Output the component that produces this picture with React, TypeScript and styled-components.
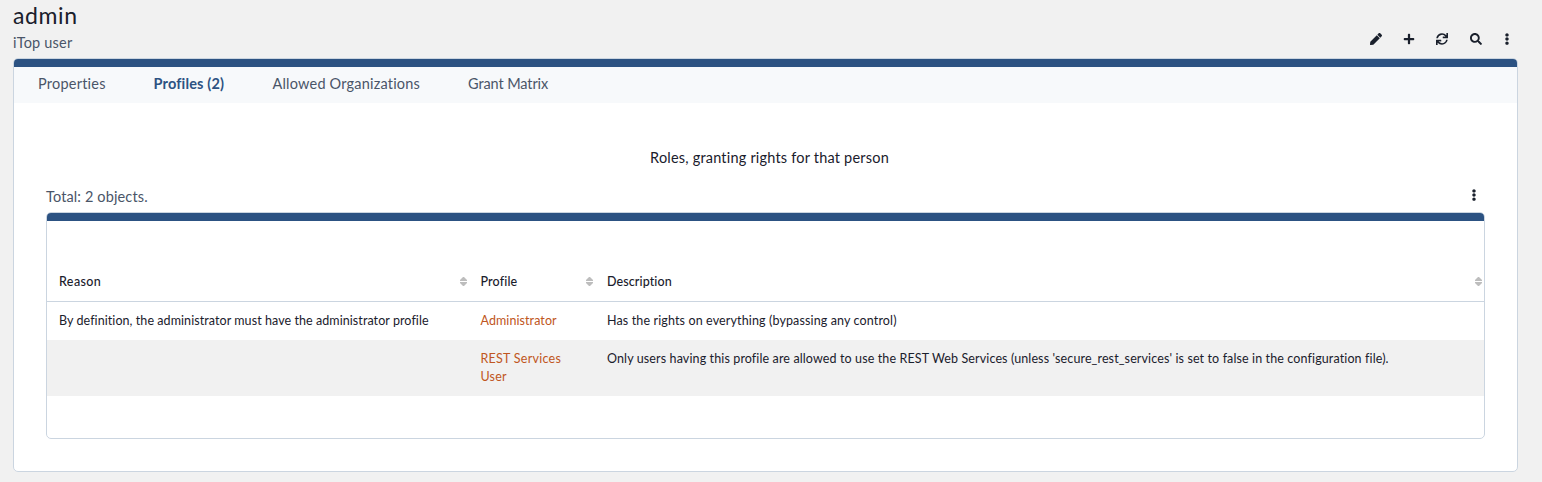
import React from "react";
import styled, { createGlobalStyle } from "styled-components";
import { FaEllipsisV, FaPen, FaPlus, FaSearch, FaSync } from "react-icons/fa";

const GlobalStyle = createGlobalStyle`
  *, *::before, *::after { box-sizing: border-box; }
  body {
    margin: 0;
    background: #f1f1f1;
    color: #1a202c;
    font-family: Lato, "Open Sans", sans-serif;
    font-size: 12.5px;
    line-height: 18px;
  }
`;

const Page = styled.main`
  height: 482px;
  padding: 0 24px 10px 13px;
  display: flex;
  flex-direction: column;
  overflow: hidden;
`;

const Header = styled.header`
  height: 58px;
  flex: none;
  display: flex;
  justify-content: space-between;
`;

const Title = styled.h1`
  margin: 0;
  font-size: 23px;
  font-weight: 400;
  line-height: 30px;
`;

const Subtitle = styled.div`
  margin-top: 2px;
  color: #4a5568;
  font-size: 14.5px;
  line-height: 21px;
`;

const Text = styled.span<{ $track?: number }>`
  letter-spacing: ${(p) => p.$track ?? 0}px;
  font-variant-ligatures: no-common-ligatures;
  white-space: nowrap;
`;

const Toolbar = styled.div`
  display: flex;
  align-items: center;
  height: 15px;
  margin: 31px -2px 0 0;
`;

const IconButton = styled.button<{ $width: number }>`
  width: ${(p) => p.$width}px;
  height: 15px;
  padding: 0;
  border: 0;
  background: none;
  color: #1a202c;
  font-size: 12px;
  display: flex;
  align-items: center;
  justify-content: center;
`;

const Panel = styled.section`
  border: 1px solid #cbd5e0;
  border-radius: 5px;
  background: #fff;
  overflow: hidden;
  &::before {
    content: "";
    display: block;
    height: 8px;
    background: #2c5282;
  }
`;

const DetailsPanel = styled(Panel)`
  flex: 1;
`;

const TabBar = styled.nav`
  height: 36px;
  padding-left: 24px;
  display: flex;
  align-items: center;
  background: #f7f9fb;
`;

const Tab = styled.a<{ $width: number; $active?: boolean }>`
  width: ${(p) => p.$width}px;
  color: ${(p) => (p.$active ? "#2c5282" : "#4a5568")};
  font-size: 14.5px;
  font-weight: ${(p) => (p.$active ? 700 : 400)};
  line-height: 21px;
  padding-bottom: 4px;
`;

const TabContent = styled.div`
  padding: 44px 32px 0;
`;

const Caption = styled.p`
  margin: 0;
  padding-left: 8px;
  font-size: 14.5px;
  line-height: 21px;
  text-align: center;
`;

const ListToolbar = styled.div`
  height: 44px;
  padding: 18px 5px 5px 0;
  display: flex;
  align-items: center;
  justify-content: space-between;
  color: #4a5568;
  font-size: 14.5px;
`;

const ListMenuButton = styled(IconButton)`
  margin-bottom: 4px;
`;

const ListPanel = styled(Panel)`
  height: 227px;
`;

const Table = styled.table`
  width: 100%;
  margin-top: 40px;
  border-collapse: collapse;
  table-layout: fixed;
`;

const HeadCell = styled.th<{ $width?: number }>`
  width: ${(p) => (p.$width ? `${p.$width}px` : "auto")};
  height: 40px;
  padding: 2px 2px 0 12px;
  border-bottom: 1px solid #cbd5e0;
  text-align: left;
  font-weight: 500;
`;

const HeadContent = styled.div`
  display: flex;
  align-items: center;
  justify-content: space-between;
`;

const SortSvg = styled.svg`
  flex: none;
  fill: #bdbdbd;
`;

const SortIcon = () => (
  <SortSvg width="7" height="9" viewBox="0 0 7 9" aria-hidden="true">
    <path d="M3 0h1l3 3v1H0V3z" />
    <path d="M0 5h7v1L4 9H3L0 6z" />
  </SortSvg>
);

const Row = styled.tr`
  &:nth-child(even) { background: #f1f1f1; }
`;

const Cell = styled.td`
  padding: 10px 0 10px 12px;
  vertical-align: top;
`;

const Link = styled.a`
  color: #c05621;
`;

const tabs = [
  { label: "Properties", width: 115.5, track: 0.22 },
  { label: "Profiles (2)", width: 119, track: 0.17, active: true },
  { label: "Allowed Organizations", width: 195.5, track: 0.2 },
  { label: "Grant Matrix", width: 100, track: -0.1 },
];

export default function App() {
  return (
    <>
      <GlobalStyle />
      <Page>
        <Header>
          <div>
            <Title><Text $track={0.6}>admin</Text></Title>
            <Subtitle><Text $track={0.2}>iTop user</Text></Subtitle>
          </div>
          <Toolbar>
            <IconButton $width={33} aria-label="Edit"><FaPen /></IconButton>
            <IconButton $width={33} aria-label="New"><FaPlus /></IconButton>
            <IconButton $width={34} aria-label="Refresh"><FaSync /></IconButton>
            <IconButton $width={34} aria-label="Search"><FaSearch /></IconButton>
            <IconButton $width={27} aria-label="More"><FaEllipsisV /></IconButton>
          </Toolbar>
        </Header>
        <DetailsPanel>
          <TabBar>
            {tabs.map((t) => (
              <Tab key={t.label} $width={t.width} $active={t.active}>
                <Text $track={t.track}>{t.label}</Text>
              </Tab>
            ))}
          </TabBar>
          <TabContent>
            <Caption><Text $track={0.2}>Roles, granting rights for that person</Text></Caption>
            <ListToolbar>
              <Text $track={0.13}>Total: 2 objects.</Text>
              <ListMenuButton $width={12} aria-label="List options"><FaEllipsisV /></ListMenuButton>
            </ListToolbar>
            <ListPanel>
              <Table>
                <thead>
                  <tr>
                    <HeadCell $width={421.5}><HeadContent><Text $track={0.4}>Reason</Text><SortIcon /></HeadContent></HeadCell>
                    <HeadCell $width={126.5}><HeadContent><Text $track={0.15}>Profile</Text><SortIcon /></HeadContent></HeadCell>
                    <HeadCell><HeadContent><Text $track={0.1}>Description</Text><SortIcon /></HeadContent></HeadCell>
                  </tr>
                </thead>
                <tbody>
                  <Row>
                    <Cell><Text $track={0.07}>By definition, the administrator must have the administrator profile</Text></Cell>
                    <Cell><Link><Text $track={0.08}>Administrator</Text></Link></Cell>
                    <Cell><Text $track={0.13}>Has the rights on everything (bypassing any control)</Text></Cell>
                  </Row>
                  <Row>
                    <Cell />
                    <Cell><Link><Text $track={0.26}>REST Services</Text><br /><Text $track={0.2}>User</Text></Link></Cell>
                    <Cell><Text $track={0.12}>Only users having this profile are allowed to use the REST Web Services (unless 'secure_rest_services' is set to false in the configuration file).</Text></Cell>
                  </Row>
                </tbody>
              </Table>
            </ListPanel>
          </TabContent>
        </DetailsPanel>
      </Page>
    </>
  );
}
